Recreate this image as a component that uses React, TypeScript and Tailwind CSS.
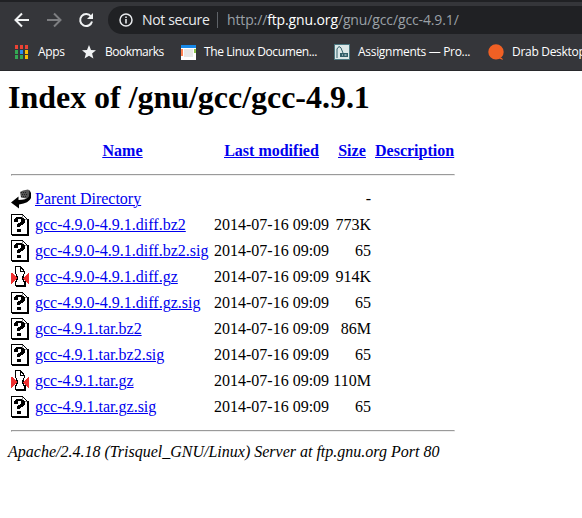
import React from "react";

const rows = [
  ["unknown", "gcc-4.9.0-4.9.1.diff.bz2", "773K"],
  ["unknown", "gcc-4.9.0-4.9.1.diff.bz2.sig", "65"],
  ["packed", "gcc-4.9.0-4.9.1.diff.gz", "914K"],
  ["unknown", "gcc-4.9.0-4.9.1.diff.gz.sig", "65"],
  ["unknown", "gcc-4.9.1.tar.bz2", "86M"],
  ["unknown", "gcc-4.9.1.tar.bz2.sig", "65"],
  ["packed", "gcc-4.9.1.tar.gz", "110M"],
  ["unknown", "gcc-4.9.1.tar.gz.sig", "65"],
];

function FileIcon({ kind }: { kind: string }) {
  if (kind === "back")
    return (
      <svg width="20" height="22" viewBox="0 0 20 22">
        <path d="M9 4 L12 2.500 L17 1.500 L19 3 V9 L15 10.500 L10 9.500Z" fill="#555" />
        <path d="M18.500 2 L20 5 V10 Q18 15 8 16.500 V20.500 L0 14.500 L7.500 8.500 V12 Q15 12 18 8.500Z" fill="#000" />
        <path d="M10 4.500 h6 M11 6.500 h6 M10 8.500 h6" stroke="#222" strokeDasharray="1 1" />
      </svg>
    );
  if (kind === "packed")
    return (
      <svg width="20" height="22" viewBox="0 0 20 22" shapeRendering="crispEdges">
        <path d="M4.500 .5 H9.500 L13.500 5.500 V19.500 H4.500Z" fill="#fff" stroke="#000" />
        <path d="M9.500 1 V5.500 H13" fill="none" stroke="#000" />
        <path d="M5 20.500 H14.500 V15" fill="none" stroke="#000" />
        <path d="M4 8 h1 v7 h-1Z M13 8 h1 v7 h-1Z" fill="#fff" />
        <path d="M5 8h1v2h1v4h-1v2h-1Z M13 8h-1v2h-1v4h1v2h1Z" fill="#000" />
        <path d="M0 7 H1 L6 12 L1 18 H0Z M18 7 H17 L12 12 L17 18 H18Z" fill="#ef3030" />
      </svg>
    );
  return (
    <svg width="20" height="22" viewBox="0 0 20 22" shapeRendering="crispEdges">
      <path d="M.5 .5 H11.500 L16.500 5.500 V20.500 H.5Z" fill="#fff" stroke="#000" />
      <path d="M17 5 h1 v17 h-17 v-1 h16Z" fill="#000" />
      <path d="M11.500 1 V5.500 H16" fill="none" stroke="#888" />
      <path d="M3 5 h1 v-1 h1 v-1 h6 v1 h2 v1 h1 v4 h-1 v1 h-1 v1 h-2 v1 h-1 v1 h-3 v-3 h1 v-1 h2 v-1 h1 v-3 h-3 v3 h-4Z M6 15 h4 v3 h-4Z" fill="#000" />
    </svg>
  );
}

function Row({ kind, name, date, size }: { kind: string; name: string; date: string; size: string }) {
  return (
    <div className="grid h-[26px] grid-cols-[20px_175px_115px_38px_79px] items-center gap-x-1 whitespace-nowrap">
      <FileIcon kind={kind} />
      <a className="text-[#0000ee] underline decoration-1">{name}</a>
      <span className="text-right">{date}</span>
      <span className="text-right">{size}</span>
    </div>
  );
}

const Rule = () => <div className="h-[2px] w-[444px] border border-t-[#9a9a9a] border-r-[#eee] border-b-[#eee] border-l-[#9a9a9a]" />;

export default function App() {
  return (
    <div className="h-[518px] w-[582px] overflow-hidden bg-white font-['Liberation_Serif',serif] text-[16px] leading-[18px] text-black">
      <header className="h-[71px] overflow-hidden border-b border-[#28292c] bg-[#35363a] font-['Open_Sans',sans-serif] text-white">
        <div className="h-[2px] bg-[#202124]" />
        <div className="mt-1 flex h-7 items-center">
          <svg className="ml-[14px] shrink-0" width="80" height="16" viewBox="0 0 80 16" fill="none" strokeWidth="2">
            <path d="M15 8 H2 M8 1.500 L1.500 8 L8 14.500" stroke="#f1f3f4" />
            <path d="M33 8 H46 M40 1.500 L46.500 8 L40 14.500" stroke="#7d7e81" />
            <path d="M77 4.500 A6 6 0 1 0 78 9.500" stroke="#f1f3f4" />
            <path d="M79 1 V7 H73Z" fill="#f1f3f4" />
          </svg>
          <div className="ml-[14px] flex h-7 w-[500px] shrink-0 items-center rounded-l-full bg-[#202124] pl-[11px] text-[14px] whitespace-nowrap">
            <svg className="shrink-0" width="14" height="14" viewBox="0 0 14 14">
              <circle cx="7" cy="7" r="6" fill="none" stroke="#e8eaed" strokeWidth="1.500" />
              <path d="M6.200 3.500 h1.600 v1.500 h-1.600Z M6.200 6 h1.600 v4.500 h-1.600Z" fill="#e8eaed" />
            </svg>
            <span className="ml-[9px] w-[67px] text-[#e8eaed] tracking-[-0.36px]">Not secure</span>
            <i className="ml-[8px] h-4 w-px bg-[#5f6368]" />
            <span className="ml-[9px] text-[#9aa0a6] tracking-[-0.13px]">http://<b className="font-normal text-white">ftp.gnu.org</b>/gnu/gcc/gcc-4.9.1/</span>
          </div>
        </div>
        <nav className="flex h-[36px] items-center pl-[15px] text-[12px] whitespace-nowrap *:shrink-0">
          <svg width="13" height="14" shapeRendering="crispEdges">
            <path d="M0 0h3v4H0z M5 0h3v4H5z M10 0h3v4h-3z" fill="#ea4335" />
            <path d="M0 5h3v4H0z M0 10h3v4H0z M5 10h3v4H5z" fill="#34a853" />
            <path d="M5 5h3v4H5z" fill="#2b8cf0" />
            <path d="M10 5h3v4h-3z M10 10h3v4h-3z" fill="#fbbc05" />
          </svg>
          <span className="ml-[10px] w-[27px] tracking-[-0.3px]">Apps</span>
          <svg className="ml-[17px]" width="14" height="14" viewBox="0 0 14 14"><path fill="#f1f3f4" d="M7 0 L9 5 L14 5.300 L10.100 8.500 L11.400 13.500 L7 10.700 L2.600 13.500 L3.900 8.500 L0 5.300 L5 5Z" /></svg>
          <span className="ml-[9px] w-[59px] tracking-[-0.5px]">Bookmarks</span>
          <svg className="ml-[17px]" width="15" height="15" shapeRendering="crispEdges">
            <path d="M0 0h15v15H0z" fill="#fff" /><path d="M0 0h15v3H0z" fill="#1688e8" /><path d="M0 4h2v7H0z" fill="#ff8050" /><path d="M3 4h9v8H3z" fill="#e8e8e8" /><path d="M13 4h2v4h-2z" fill="#8bc34a" />
          </svg>
          <span className="ml-[8px] w-[114px] tracking-[-0.4px]">The Linux Documen...</span>
          <svg className="ml-[16px]" width="16" height="16" viewBox="0 0 16 16">
            <path d="M0 0h16v16H0z" fill="#4b7780" /><path d="M1 1h14v14H1z" fill="#dce8e8" /><path d="M3 14 V5 Q5 1 7 4 L9 9" fill="none" stroke="#315f69" /><path d="M6 9h8v4H6z" fill="#315f69" /><path d="M8 11h1 M10.500 11h2" stroke="#dce8e8" />
          </svg>
          <span className="ml-[8px] w-[113px] tracking-[-0.3px]">Assignments — Pro...</span>
          <svg className="ml-[17px]" width="16" height="16"><path d="M8 .2a7.700 7.700 0 1 1 0 15.400A7.700 7.700 0 0 1 8 .2M10 14h4l1 2Z" fill="#f06024" /></svg>
          <span className="ml-[8px] tracking-[-0.3px]">Drab Desktop</span>
        </nav>
      </header>
      <main className="pl-2">
        <h1 className="pt-[8px] text-[32px] leading-[37px] font-bold tracking-[-0.03px]">Index of /gnu/gcc/gcc-4.9.1</h1>
        <section className="pl-[3px]">
          <div className="mt-[26px] grid grid-cols-[20px_175px_115px_38px_79px] gap-x-1 text-center font-bold whitespace-nowrap text-[#0000ee] underline decoration-1">
            <span /><a>Name</a><a>Last modified</a><a>Size</a><a>Description</a>
          </div>
          <div className="mt-[14px] mb-[10px]"><Rule /></div>
          <Row kind="back" name="Parent Directory" date="" size="-" />
          {rows.map(([kind, name, size]) => <Row key={name} kind={kind} name={name} date="2014-07-16 09:09" size={size} />)}
          <div className="mt-[10px]"><Rule /></div>
        </section>
        <address className="mt-[11px] italic">Apache/2.4.18 (Trisquel_GNU/Linux) Server at ftp.gnu.org Port 80</address>
      </main>
    </div>
  );
}
